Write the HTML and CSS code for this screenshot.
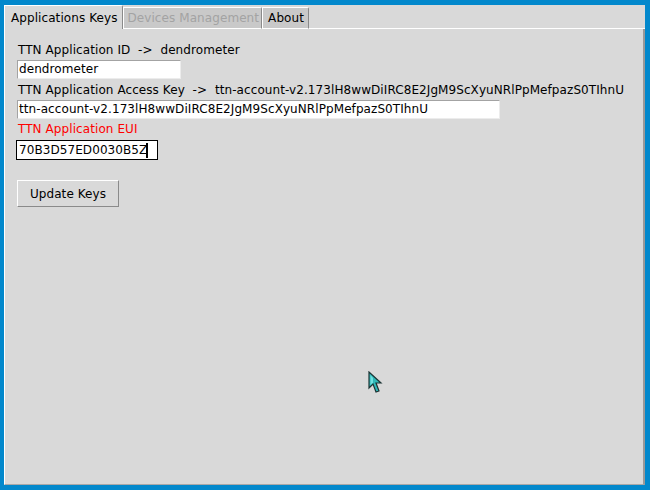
FILE: index.html
```html
<!DOCTYPE html>
<html>
<head>
<meta charset="utf-8">
<link rel="stylesheet" href="styles.css">
</head>
<body>
<div class="window">
  <div class="tabbar">
    <div class="tab selected">Applications Keys</div>
    <div class="tab disabled">Devices Management</div>
    <div class="tab about">About</div>
    <div class="tab-fill"></div>
  </div>
  <div class="panel">
    <div class="label">TTN Application ID&nbsp;&nbsp;-&gt;&nbsp;&nbsp;dendrometer</div>
    <div class="entry entry-id">dendrometer</div>
    <div class="label">TTN Application Access Key&nbsp;&nbsp;-&gt;&nbsp;&nbsp;ttn-account-v2.173lH8wwDiIRC8E2JgM9ScXyuNRlPpMefpazS0TIhnU</div>
    <div class="entry entry-key">ttn-account-v2.173lH8wwDiIRC8E2JgM9ScXyuNRlPpMefpazS0TIhnU</div>
    <div class="label label-red">TTN Application EUI</div>
    <div class="entry entry-eui">70B3D57ED0030B5Z<span class="caret"></span></div>
    <div class="button">Update Keys</div>
  </div>
  <svg class="pointer" width="16" height="24" viewBox="0 0 16 24">
    <polygon points="1,1 1,17 5,13 8,21 11,20 8,12 13,12" fill="#2fb8b8" stroke="#1c3434" stroke-width="1.2" stroke-linejoin="miter"/>
    <polygon points="2.5,4 2.5,14 5,11.5 5,7" fill="#6fe0e0"/>
  </svg>
</div>
</body>
</html>
```
FILE: styles.css
```css
html, body {
  margin: 0;
  padding: 0;
}
body {
  background: #0288cc;
  width: 650px;
  height: 490px;
  overflow: hidden;
  font-family: "DejaVu Sans", sans-serif;
  font-size: 12px;
  line-height: 14px;
  letter-spacing: 0.08px;
  color: #000;
}
.window {
  position: relative;
  margin: 5px 0 0 4px;
  width: 641px;
  height: 480px;
  background: #d9d9d9;
  display: flex;
  flex-direction: column;
}
.tabbar {
  display: flex;
  align-items: flex-end;
  height: 24px;
  flex: none;
}
.tab {
  box-sizing: border-box;
  height: 22px;
  padding: 3px 5px 3px 5px;
  background: #c9c9c9;
  border-top: 1px solid #ffffff;
  border-left: 1px solid #ffffff;
  border-right: 1px solid #8a8a8a;
  border-bottom: 1px solid #ffffff;
  border-top-right-radius: 2px;
  white-space: nowrap;
}
.tab.selected {
  height: 24px;
  padding: 5px 5px 4px 6px;
  background: #d9d9d9;
  border-bottom: none;
}
.tab.disabled {
  color: #a3a3a3;
  padding: 3px 2px 3px 3px;
}
.tab.about {
  padding: 3px 4px 3px 5px;
}
.tab-fill {
  flex: 1;
  border-bottom: 1px solid #ffffff;
}
.panel {
  flex: 1;
  box-sizing: border-box;
  border-left: 1px solid #ffffff;
  border-right: 2px solid #999999;
  border-bottom: 1px solid #a8a8a8;
  padding: 14px 0 0 12px;
  display: flex;
  flex-direction: column;
  align-items: flex-start;
}
.label {
  white-space: nowrap;
  padding-left: 1px;
}
.label-red {
  color: #ff0000;
}
.entry {
  box-sizing: border-box;
  height: 19px;
  margin-top: 3px;
  background: #ffffff;
  border: 1px solid;
  border-color: #a3a3a3 #ececec #ececec #a3a3a3;
  padding: 0 2px 0 1px;
  line-height: 17px;
  white-space: nowrap;
  overflow: hidden;
}
.entry-id {
  width: 164px;
  margin-bottom: 4px;
}
.entry-key {
  width: 483px;
  margin-bottom: 3px;
}
.entry-eui {
  width: 142px;
  height: 20px;
  margin-top: 4px;
  margin-left: -1px;
  padding-left: 2px;
  border: 1px solid #000000;
  line-height: 18px;
  display: flex;
  align-items: center;
}
.caret {
  display: inline-block;
  width: 2px;
  height: 15px;
  background: #000;
  margin-left: -1px;
}
.button {
  box-sizing: border-box;
  width: 102px;
  height: 27px;
  margin-top: 20px;
  border: 1px solid;
  border-color: #ffffff #8a8a8a #8a8a8a #ffffff;
  display: flex;
  align-items: center;
  justify-content: center;
  padding-top: 1px;
}
.pointer {
  position: absolute;
  left: 364px;
  top: 366px;
}
```
